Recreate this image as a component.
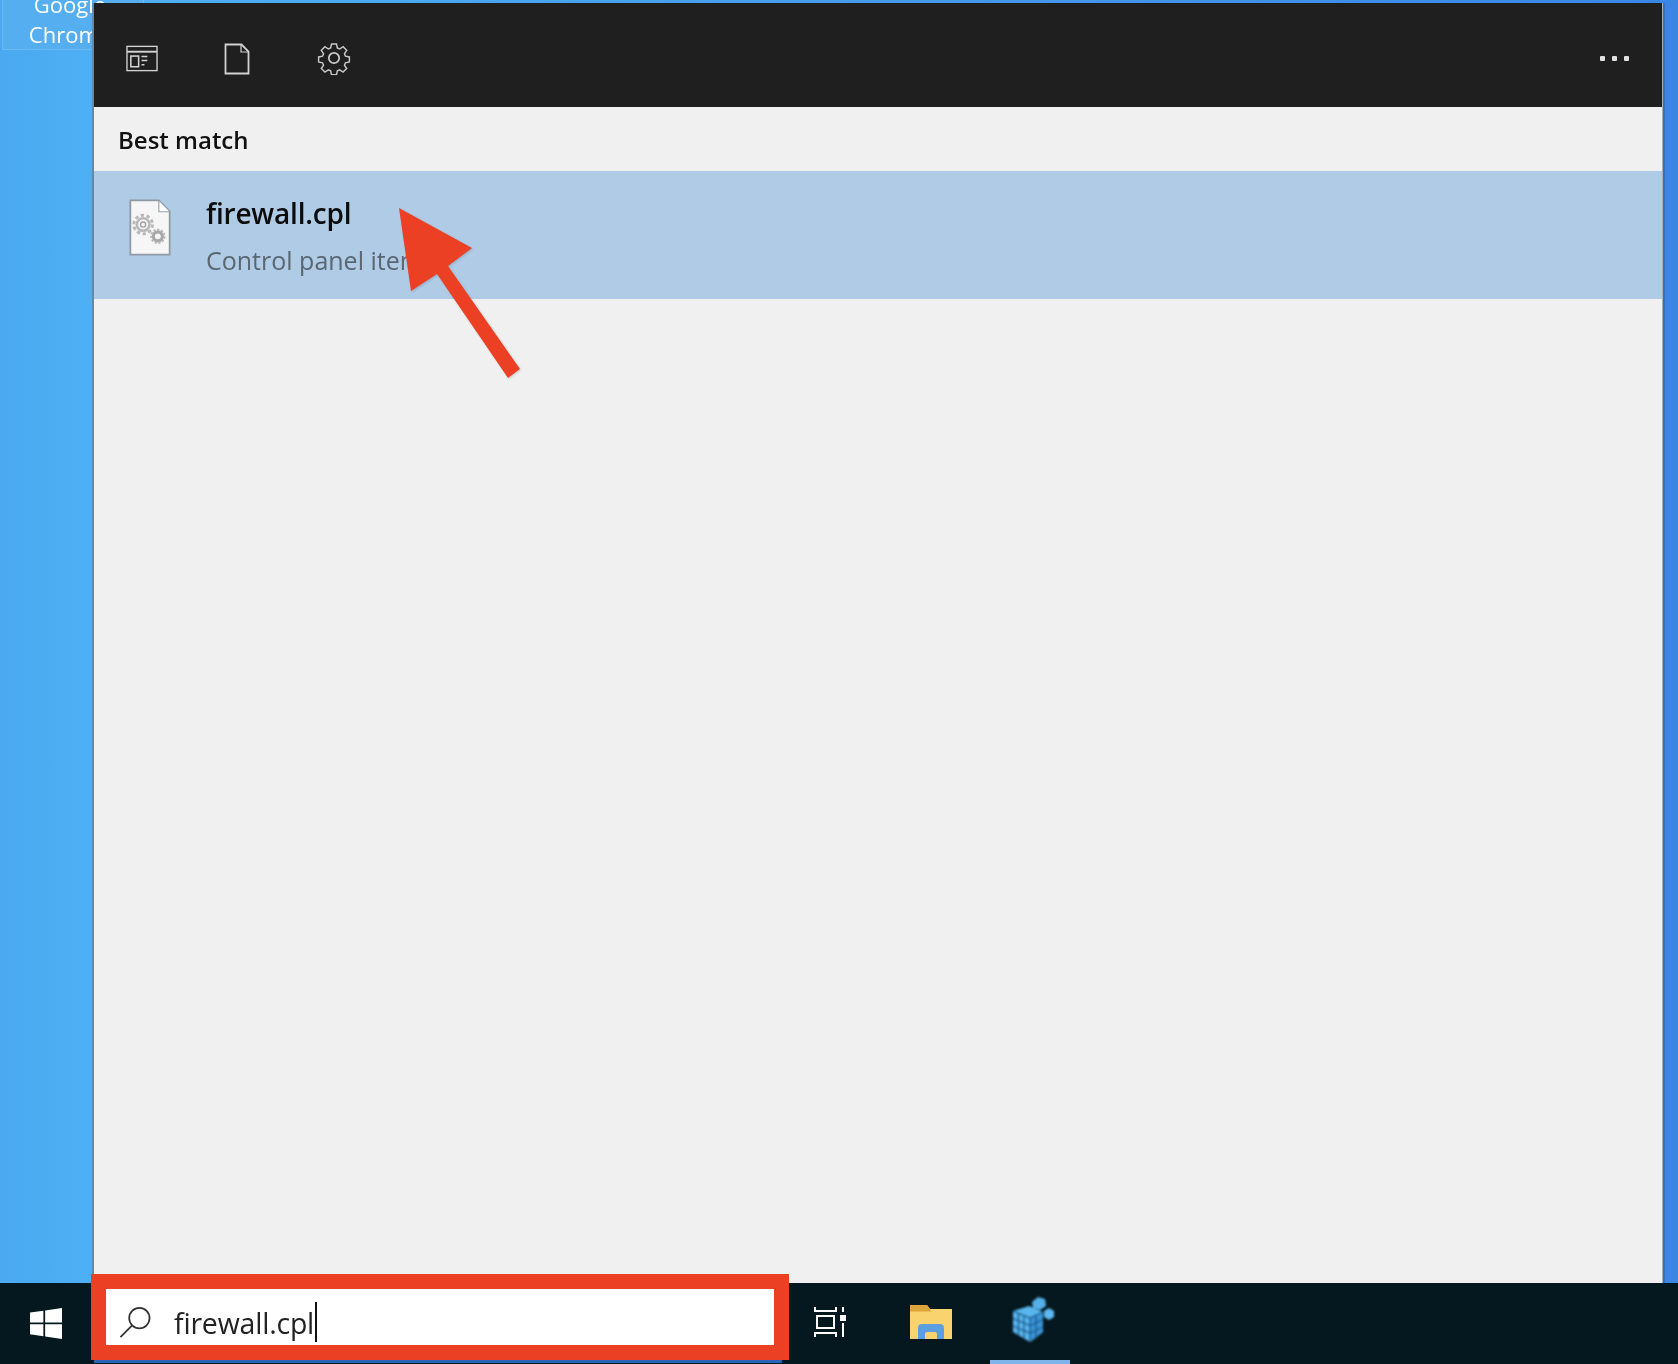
<div class="desktop">
  <div class="desk-icon"><span>Google</span><span>Chrome</span></div>

  <main class="panel">
    <header class="topbar">
      <svg class="ico i1" viewBox="0 0 33 27" fill="none" stroke="#d2d2d2" stroke-width="1.4">
        <rect x="1" y="1" width="31" height="25" />
        <path d="M1 6.5h31" stroke-width="2" />
        <rect x="5" y="11" width="8" height="11" stroke-width="1.6" />
        <path d="M16 11.5h6M16 15.5h6M16 20h3" stroke-width="1.5" />
      </svg>
      <svg class="ico i2" viewBox="0 0 26 32" fill="none" stroke="#d2d2d2" stroke-width="1.8">
        <path d="M1.5 1.5h16l7 7v22h-23z" />
        <path d="M17 2v7h7" stroke-width="1.2" />
      </svg>
      <svg class="ico i3" viewBox="0 0 34 34" fill="none" stroke="#c8c8c8" stroke-width="1.6">
        <circle cx="17" cy="17" r="5.2" stroke-width="1.8" />
        <path d="M14.2 1.5h5.6l.9 4.4 2.6 1.1 3.8-2.5 4 4-2.5 3.8 1.1 2.6 4.4.9v5.6l-4.4.9-1.1 2.6 2.5 3.8-4 4-3.8-2.5-2.6 1.1-.9 4.4h-5.6l-.9-4.4-2.6-1.1-3.8 2.5-4-4 2.5-3.8-1.1-2.6-4.4-.9v-5.6l4.4-.9 1.1-2.6-2.5-3.8 4-4 3.8 2.5 2.6-1.1z" transform="translate(1.7 1.7) scale(.9)" />
      </svg>
      <div class="dots"><i></i><i></i><i></i></div>
    </header>

    <div class="section">Best match</div>

    <div class="row">
      <svg class="file" viewBox="0 0 44 58">
        <path d="M2 1.5h29l11 11v44H2z" fill="#f6f6f6" stroke="#8f9aa4" stroke-width="1.8" />
        <path d="M31 2v11h11" fill="#fff" stroke="#9aa4ad" stroke-width="1.2" />
        <g fill="none" stroke="#b8b8b8">
          <circle cx="15" cy="26" r="6.4" stroke-width="2.6" />
          <circle cx="15" cy="26" r="9.5" stroke-width="3" stroke-dasharray="3.4 2.6" />
          <circle cx="15" cy="26" r="2.6" stroke="#a0a0a0" stroke-width="1.4" />
          <circle cx="30" cy="38" r="4.6" stroke="#a8a8a8" stroke-width="3.2" />
          <circle cx="30" cy="38" r="7" stroke="#b4b4b4" stroke-width="1.6" stroke-dasharray="2.4 1.6" />
        </g>
      </svg>
      <div class="row-text">
        <div class="title">firewall.cpl</div>
        <div class="sub">Control panel item</div>
      </div>
    </div>
  </main>

  <footer class="taskbar">
    <div class="start">
      <svg class="soft" viewBox="0 0 33 33" width="32" height="33" fill="#fff">
        <path d="M0 5.2 13.8 3.3V15.4H0zM15.6 3 33 .5V15.4H15.6zM0 17.4H13.8V29.6L0 27.7zM15.6 17.4H33V32.4L15.6 30z" />
      </svg>
    </div>
    <div class="search">
      <svg class="mag" viewBox="0 0 34 34" fill="none" stroke="#333" stroke-width="1.8">
        <circle cx="21" cy="13" r="10.5" />
        <path d="M13.5 20.5 1.5 32.5" />
      </svg>
      <span class="query">firewall.cpl</span><span class="caret"></span>
    </div>
    <svg class="tv soft" viewBox="0 0 32 32" fill="none" stroke="#fff" stroke-width="2">
      <path d="M1 1v4h21V1M3 10h17v12H3zM1 31v-4h21v4" />
      <path d="M29 1v5M29 17v14" />
      <rect x="26" y="9" width="6" height="6" fill="#fff" stroke="none" />
    </svg>
    <svg class="folder soft" viewBox="0 0 44 36">
      <path d="M1 1h17l3 4h22v30H1z" fill="#f8d36e" />
      <path d="M1 1h17l3 4 1 2.5H1z" fill="#dda63c" />
      <path d="M9 35V24a4 4 0 0 1 4-4h18a4 4 0 0 1 4 4v11H28v-5a2 2 0 0 0-2-2h-8a2 2 0 0 0-2 2v5z" fill="#5a9fe0" />
    </svg>
    <div class="reg-tab">
      <svg class="reg" viewBox="0 0 44 48">
        <path d="M1 15 17 10l14 6v20L18 46 1 36z" fill="#58b6ee" />
        <path d="M18 22 31 16v20L18 46z" fill="#3a94d8" />
        <path d="M1 15l17 7 13-6M18 22v24M6.5 18v21M12 20v23M24 19.500v23M1 22.500l17 7 13-6M1 30l17 7 13-6" stroke="#1d5a8a" stroke-width="1.3" fill="none" />
        <path d="M20 6l6-5 7 2 1 7-6 4-7-2z" fill="#55b0ea" />
        <path d="M32 15l5-3 5 3v6l-5 3-5-3z" fill="#5cb8f0" />
      </svg>
    </div>
    <div class="strip"></div>
  </footer>

  <svg class="arrow" viewBox="0 0 130 175">
    <path d="M2 3 75 43 51 61 123 164 111 173 40 69 14 86z" fill="#ec4024" />
  </svg>
</div>

<style>
  :global(body) { margin: 0; background: #06181f; }
  .desktop {
    position: relative;
    height: 1364px;
    overflow: hidden;
    display: flex;
    flex-direction: column;
    font-family: "Open Sans", "Noto Sans", sans-serif;
    background: linear-gradient(90deg, #4aa9f0 0, #4eb0f4 94px, #3a86e6 1662px, #3d85e0 1678px);
  }
  .soft { filter: blur(.5px); }
  .desk-icon {
    position: absolute;
    left: 2px; top: -12px;
    width: 142px; height: 62px;
    box-sizing: border-box;
    border: 1px solid #6db8f0;
    background: #55aef0;
    color: #fff;
    font-size: 22px;
    line-height: 30px;
    display: flex; flex-direction: column; align-items: center;
    padding-right: 6px;
    filter: blur(.5px);
  }
  .panel {
    margin: 3px 0 0 94px;
    width: 1568px;
    flex: 1;
    background: #f0f0f0;
    display: flex;
    flex-direction: column;
    box-shadow: -2px 0 0 #5a8bb5, 1px 0 0 #a8b0b8, 3px 0 0 #3570c0;
    position: relative;
  }
  .topbar {
    height: 104px;
    box-sizing: border-box;
    background: #1f1f1f;
    display: flex;
    align-items: center;
    padding: 0 33px 0 32px;
    flex: none;
  }
  .ico { display: block; flex: none; filter: blur(.5px); }
  .i1 { width: 32px; height: 27px; margin-top: 6px; }
  .i2 { width: 26px; height: 32px; margin-left: 66px; margin-top: 8px; }
  .i3 { width: 34px; height: 34px; margin-left: 67px; margin-top: 6px; }
  .dots { margin-left: auto; display: flex; gap: 7px; margin-top: 6px; filter: blur(.7px); }
  .dots i { width: 5px; height: 5px; background: #e0e0e0; border-radius: 1px; display: block; }
  .section {
    height: 64px;
    flex: none;
    box-sizing: border-box;
    padding: 17px 0 0 24px;
    font-size: 24px;
    line-height: 32px;
    font-weight: 600;
    color: #111;
    filter: blur(.5px);
  }
  .row {
    height: 128px;
    flex: none;
    background: #afcbe6;
    display: flex;
    box-sizing: border-box;
    padding: 28px 0 0 34px;
  }
  .file { width: 44px; height: 57px; flex: none; filter: blur(.7px); }
  .row-text { margin-left: 34px; margin-top: -6px; filter: blur(.5px); }
  .title { font-size: 28px; line-height: 40px; font-weight: 600; color: #0c0c0c; letter-spacing: -.2px; }
  .sub { font-size: 25px; line-height: 36px; margin-top: 9px; color: #5a6670; }
  .taskbar {
    height: 81px;
    flex: none;
    position: relative;
    background: #06181f;
    display: flex;
    align-items: flex-start;
    z-index: 1;
  }
  .start { width: 92px; margin-right: -1px; flex: none; display: flex; justify-content: center; padding-top: 24px; box-sizing: border-box; }
  .search {
    margin-top: -9px;
    width: 698px;
    height: 86px;
    box-sizing: border-box;
    flex: none;
    border: 15px solid #ec4024;
    background: #fff;
    display: flex;
    align-items: center;
    padding: 10px 0 0 13px;
    position: relative;
    z-index: 1;
  }
  .mag { width: 33px; height: 34px; flex: none; filter: blur(.4px); }
  .query { margin-left: 22px; font-size: 28.5px; line-height: 40px; padding-top: 2px; color: #222; letter-spacing: -.2px; filter: blur(.5px); }
  .caret { display: block; width: 2px; height: 40px; background: #111; margin-left: 1px; }
  .tv { width: 32px; height: 32px; margin: 23px 0 0 25px; flex: none; }
  .folder { width: 44px; height: 36px; margin: 21px 0 0 63px; flex: none; }
  .reg-tab {
    margin-left: 37px;
    width: 80px; height: 81px;
    flex: none;
    box-sizing: border-box;
    border-bottom: 4px solid #7fb4ea;
    padding: 13px 0 0 22px;
  }
  .reg { width: 44px; height: 48px; display: block; filter: blur(.8px); }
  .strip {
    position: absolute;
    left: 94px; bottom: 1px;
    width: 688px; height: 3px;
    background: #2a63b8;
  }
  .arrow {
    position: absolute;
    left: 397px; top: 205px;
    width: 130px; height: 175px;
    filter: drop-shadow(1px 1px 1px rgba(0,0,0,.15));
  }
</style>
